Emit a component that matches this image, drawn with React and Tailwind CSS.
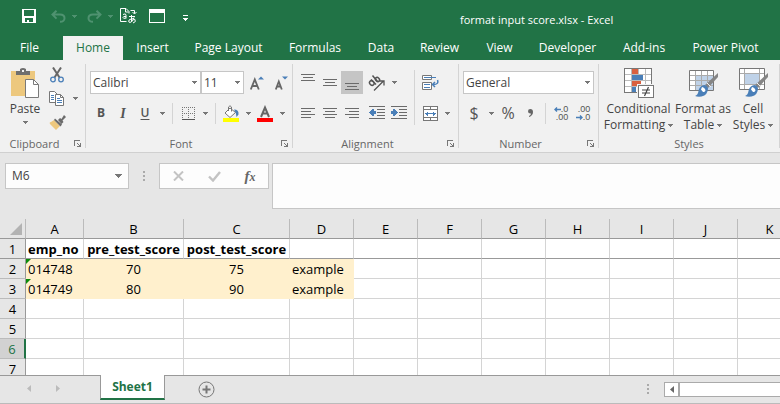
import React from "react";

const TABS = [
  { name: "Insert", width: "w-[59px]" },
  { name: "Page Layout", width: "w-[93px]" },
  { name: "Formulas", width: "w-[80px]" },
  { name: "Data", width: "w-[52px]" },
  { name: "Review", width: "w-[65px]" },
  { name: "View", width: "w-[55px]" },
  { name: "Developer", width: "w-[81px]" },
  { name: "Add-ins", width: "w-[72px]" },
  { name: "Power Pivot", width: "w-[91px]" },
];

const COLUMNS = ["A", "B", "C", "D", "E", "F", "G", "H", "I", "J", "K"];

const ROWS = [
  { n: 1, cells: ["emp_no", "pre_test_score", "post_test_score"] },
  { n: 2, cells: ["014748", "70", "75", "example"] },
  { n: 3, cells: ["014749", "80", "90", "example"] },
  { n: 4, cells: [] },
  { n: 5, cells: [] },
  { n: 6, cells: [] },
  { n: 7, cells: [] },
];

function Caret({ className = "text-[#777]" }) {
  return (
    <svg width="5" height="3" viewBox="0 0 5 3" className={`shrink-0 ${className}`} fill="currentColor" shapeRendering="crispEdges" aria-hidden="true">
      <path d="M0 0h5v1H4v1H3v1H2V2H1V1H0z" />
    </svg>
  );
}

function Tool({ label, children, className = "w-[22px]", pressed = false }) {
  return (
    <button type="button" aria-label={label} className={`flex h-full shrink-0 items-center justify-center text-[#555] ${className} ${pressed ? "bg-[#c5c5c5]" : ""}`}>
      {children}
    </button>
  );
}

function More({ label }) {
  return (
    <Tool label={label} className="w-3">
      <Caret />
    </Tool>
  );
}

function Divider({ className }) {
  return <span className={`w-px shrink-0 bg-[#d4d4d4] ${className}`} />;
}

function Group({ title, launcher = true, width, children }) {
  return (
    <section aria-label={title} className={`flex shrink-0 ${width}`}>
      <div className="flex min-w-0 flex-1 flex-col">
        <div className="h-[73px]">{children}</div>
        <div className="flex h-[14px] items-center">
          <h2 className="flex-1 text-center text-[11px] leading-[14px] text-[#666]">{title}</h2>
          {launcher && (
            <button type="button" aria-label={`${title} settings`} className="flex w-4 justify-start pl-[5px]">
              <svg width="8" height="8" viewBox="0 0 8 8" shapeRendering="crispEdges" fill="#777" aria-hidden="true">
                <path d="M0 0h6v1H1v5H0zM3 3h1v1H3zM4 4h1v1H4zM5 5h1v1H5zM7 3v4H3V6h2V5h1V3z" />
              </svg>
            </button>
          )}
        </div>
      </div>
      <Divider className="h-[84px]" />
    </section>
  );
}

function Dropdown({ label, value, className }) {
  return (
    <span className={`relative flex h-full shrink-0 ${className}`}>
      <select aria-label={label} defaultValue={value} className="h-full w-full appearance-none border border-[#c6c6c6] bg-white pl-[2px] text-[12px] text-[#444]">
        <option>{value}</option>
      </select>
      <span className="pointer-events-none absolute top-[10px] right-[4px]">
        <Caret />
      </span>
    </span>
  );
}

function Lines({ rows, width = 14, height = 11 }) {
  return (
    <svg width={width} height={height} viewBox={`0 0 ${width} ${height}`} fill="#6b6b6b" shapeRendering="crispEdges" aria-hidden="true">
      {rows.map(([x, y, w]) => (
        <rect key={y} x={x} y={y} width={w} height="1" />
      ))}
    </svg>
  );
}

function QuickAccess() {
  return (
    <div className="flex h-8 items-center pl-[18px] text-white">
      <button type="button" aria-label="Save" className="flex w-[22px] justify-center">
        <svg width="14" height="14" viewBox="0 0 14 14" fill="#fff" shapeRendering="crispEdges" aria-hidden="true">
          <path fillRule="evenodd" d="M0 0h14v14H0zM2 1v6h10V1zM3 9v4h2v-2h2v2h4V9z" />
        </svg>
      </button>
      <button type="button" aria-label="Undo" className="ml-[7px] flex w-[22px] justify-center text-[#4f9270]">
        <svg width="15" height="13" viewBox="0 0 15 13" fill="none" stroke="currentColor" strokeWidth="2" aria-hidden="true">
          <path d="M5.5 .7 1.5 4.6l4 4M2 4.6h7c6 0 6 7.2 0 7.2" />
        </svg>
      </button>
      <button type="button" aria-label="Undo history" className="flex w-[10px] justify-center">
        <Caret className="text-[#4f9270]" />
      </button>
      <button type="button" aria-label="Redo" className="ml-[4px] flex w-[22px] justify-center text-[#4f9270]">
        <svg width="15" height="13" viewBox="0 0 15 13" fill="none" stroke="currentColor" strokeWidth="2" aria-hidden="true">
          <path d="m9.5 .7 4 3.9-4 4M13 4.6H6c-6 0-6 7.2 0 7.2" />
        </svg>
      </button>
      <button type="button" aria-label="Redo history" className="flex w-[10px] justify-center">
        <Caret className="text-[#4f9270]" />
      </button>
      <button type="button" aria-label="Translate" className="ml-[2px] flex w-[22px] justify-center">
        <svg width="17" height="16" viewBox="0 0 17 16" fill="none" stroke="#fff" aria-hidden="true">
          <path d="M6.5 13.5h-6v-13h5.5l3 3v2M5.5 .5v3.5h3M3 6.5q3-1.5 3 .5v3.5M6 8.5q-3-.5-3 1t3 .5M10.5 2.5h4v3M12.5 4l2 2 2-2M9 8.500h6M11.5 7v6.5M14 9.5q-1 4.5-4 5-2 0-1-2.500 3-2.5 6-.5 1.500 2.5-2 3.500" />
        </svg>
      </button>
      <button type="button" aria-label="Form" className="ml-[7px] flex w-[22px] justify-center">
        <svg width="16" height="14" viewBox="0 0 16 14" fill="#fff" shapeRendering="crispEdges" aria-hidden="true">
          <path fillRule="evenodd" d="M0 0h16v14H0zM1 4v9h14V4z" />
        </svg>
      </button>
      <button type="button" aria-label="Customize toolbar" className="ml-[6px] flex w-[22px] justify-center pt-[3px]">
        <svg width="5" height="6" viewBox="0 0 5 6" fill="#fff" shapeRendering="crispEdges" aria-hidden="true">
          <path d="M0 0h5v1H0zM0 3h5v1H4v1H3v1H2V5H1V4H0z" />
        </svg>
      </button>
    </div>
  );
}

function ClipboardGroup() {
  return (
    <Group title="Clipboard" width="w-[86px]">
      <div className="flex">
        <button type="button" className="flex w-[45px] flex-col items-center pt-1 pl-[5px] text-[12px] leading-4 text-[#444]">
          <svg width="28" height="30" viewBox="0 0 28 30" aria-hidden="true">
            <path d="M0 3h24v25H0z" fill="#edc87e" />
            <path d="M5 7V3h4V1q3-2 6 0v2h4v4z" fill="#6f6f6f" />
            <rect x="11" y="2" width="2" height="2" fill="#f1f1f1" />
            <path d="M14.5 11.5h8l5 5v13h-13z" fill="#fff" stroke="#7a7a7a" />
            <path d="M22.5 11.5v5h5" fill="none" stroke="#7a7a7a" />
          </svg>
          <span className="mt-[3px]">Paste</span>
          <span className="mt-[4px]"><Caret /></span>
        </button>
        <div className="flex flex-col gap-[2px]">
          <div className="flex h-[21px]">
            <Tool label="Cut" className="w-[24px]">
              <svg width="14" height="16" viewBox="0 0 14 16" fill="none" aria-hidden="true">
                <path d="m3 .5 6.500 10M11 .5 4.500 10.500" stroke="#666" strokeWidth="2" />
                <circle cx="3" cy="12.500" r="2.300" stroke="#4a7fb8" strokeWidth="1.300" />
                <circle cx="11" cy="12.500" r="2.300" stroke="#4a7fb8" strokeWidth="1.300" />
              </svg>
            </Tool>
          </div>
          <div className="flex h-[22px]">
            <Tool label="Copy" className="w-[24px]">
              <svg width="16" height="15" viewBox="0 0 16 15" fill="#fff" stroke="#777" aria-hidden="true">
                <path d="M.5 .5h5l3 3v8h-8z" />
                <path d="M2 4.500h3M2 6.500h3M2 8.500h3" stroke="#4a7fb8" />
                <path d="M6.500 3.500h5l3 3v8h-8z" />
                <path d="M11.500 3.500v3h3" fill="none" />
                <path d="M8 7.500h3M8 9.500h5M8 11.500h5" stroke="#4a7fb8" />
              </svg>
            </Tool>
            <More label="Copy options" />
          </div>
          <div className="flex h-[22px]">
            <Tool label="Format Painter" className="w-[24px]">
              <svg width="17" height="15" viewBox="0 0 17 15" aria-hidden="true">
                <path d="m5 5 6 6-4 4L1 9q-1-2 1-2z" fill="#edc87e" />
                <path d="m6 3.500 7 6-1.500 2L5 5zM9 5l2-2 1.500 1L15 0l2 2-3.500 3.500 1 1.500-2 2z" fill="#6b6b6b" />
              </svg>
            </Tool>
          </div>
        </div>
      </div>
    </Group>
  );
}

function FontGroup() {
  return (
    <Group title="Font" width="w-[207px]">
      <div className="flex flex-col gap-2 pt-[7px] pl-1">
        <div className="flex h-[23px]">
          <Dropdown label="Font name" value="Calibri" className="w-[111px]" />
          <Dropdown label="Font size" value="11" className="w-[43px]" />
          <Tool label="Increase font size" className="w-[26px]">
            <svg width="14" height="14" viewBox="0 0 14 14" aria-hidden="true">
              <path d="m.8 13.500 4-10 4 10M2.300 10h5" fill="none" stroke="#666" strokeWidth="1.800" />
              <path d="M8 3.500h6L11 .5z" fill="#4a7fb8" />
            </svg>
          </Tool>
          <Tool label="Decrease font size" className="w-[22px]">
            <svg width="13" height="14" viewBox="0 0 13 14" aria-hidden="true">
              <path d="m.8 13.500 3-8 3 8M2 10.500h4" fill="none" stroke="#666" strokeWidth="1.800" />
              <path d="M7 .5h6l-3 3z" fill="#4a7fb8" />
            </svg>
          </Tool>
        </div>
        <div className="flex h-[22px] items-center">
          <Tool label="Bold"><b className="text-[12px]">B</b></Tool>
          <Tool label="Italic"><i className="font-['Liberation_Serif',serif] text-[14px] font-bold">I</i></Tool>
          <Tool label="Underline"><span className="text-[12px] font-semibold underline underline-offset-2">U</span></Tool>
          <More label="Underline options" />
          <Divider className="mx-1 h-[21px]" />
          <Tool label="Borders">
            <svg width="13" height="13" viewBox="0 0 13 13" shapeRendering="crispEdges" aria-hidden="true">
              <path d="M0 .5h13M0 6.500h13M.5 0v12M6.500 0v12M12.500 0v12" stroke="#777" strokeDasharray="1 1" />
              <path d="M0 12.500h13" stroke="#555" />
            </svg>
          </Tool>
          <More label="Border options" />
          <Divider className="mx-1 h-[21px]" />
          <Tool label="Fill color">
            <svg width="16" height="17" viewBox="0 0 16 17" aria-hidden="true">
              <path d="m2 8 5-5 5.500 4.500L7 12.500z" fill="#fff" stroke="#777" />
              <path d="M5.500 6V2q1.500-2.500 3 0v4.500" fill="none" stroke="#777" />
              <path d="M11 4.500q5 0 4.500 5l-2 2.500q0-4-2.500-7.500z" fill="#4a7fb8" />
              <path d="M0 13h16v4H0z" fill="#ff0" />
            </svg>
          </Tool>
          <More label="Fill color options" />
          <Tool label="Font color">
            <svg width="16" height="17" viewBox="0 0 16 17" aria-hidden="true">
              <path d="m4 12 4-9.500 4 9.500M5.500 8.500h5" fill="none" stroke="#666" strokeWidth="2" />
              <path d="M0 13h16v4H0z" fill="#f00" />
            </svg>
          </Tool>
          <More label="Font color options" />
        </div>
      </div>
    </Group>
  );
}

function Indent({ outdent }) {
  return (
    <svg width="16" height="14" viewBox="0 0 16 14" shapeRendering="crispEdges" aria-hidden="true">
      <path d="M0 .5h16M8 3.500h8M8 6.500h8M8 9.500h8M0 12.500h16" stroke="#6b6b6b" />
      {outdent ? (
        <path d="M0 6h1V5h1V4h1V3h2v2h2v3H5v2H3V9H2V8H1V7H0z" fill="#4a7fb8" />
      ) : (
        <path d="M7 6H6V5H5V4H4V3H2v2H0v3h2v2h2V9h1V8h1V7h1z" fill="#4a7fb8" />
      )}
    </svg>
  );
}

function AlignmentGroup() {
  return (
    <Group title="Alignment" width="w-[166px]">
      <div className="flex pl-1">
        <div className="flex flex-col gap-2 pt-[7px]">
          <div className="flex h-[23px]">
            <Tool label="Top align"><Lines height={17} rows={[[0, 0, 14], [2, 3, 10], [0, 6, 14]]} /></Tool>
            <Tool label="Middle align"><Lines height={17} rows={[[0, 5, 14], [2, 8, 10], [0, 11, 14]]} /></Tool>
            <Tool label="Bottom align" pressed><Lines height={17} rows={[[0, 9, 14], [2, 12, 10], [0, 15, 14]]} /></Tool>
            <Tool label="Orientation" className="ml-[3px] w-[22px]">
              <svg width="18" height="16" viewBox="0 0 18 16" fill="none" stroke="#555" aria-hidden="true">
                <path d="m6 15.500 9-9M11.500 6H16v4.500" strokeWidth="1.300" />
                <ellipse cx="3.800" cy="8" rx="2" ry="2.500" transform="rotate(-45 3.800 8)" strokeWidth="1.500" />
                <ellipse cx="9.500" cy="4.500" rx="1.800" ry="2.300" transform="rotate(-45 9.500 4.500)" strokeWidth="1.500" />
                <path d="m3 4.500 5 5M4.500 .5l5 6" strokeWidth="1.500" />
              </svg>
            </Tool>
            <More label="Orientation options" />
          </div>
          <div className="flex h-[22px]">
            <Tool label="Align left"><Lines rows={[[0, 0, 14], [0, 3, 10], [0, 6, 14], [0, 9, 10]]} /></Tool>
            <Tool label="Center"><Lines rows={[[0, 0, 14], [2, 3, 10], [0, 6, 14], [2, 9, 10]]} /></Tool>
            <Tool label="Align right"><Lines rows={[[0, 0, 14], [4, 3, 10], [0, 6, 14], [4, 9, 10]]} /></Tool>
            <Tool label="Decrease indent" className="ml-[3px] w-[22px]"><Indent outdent /></Tool>
            <Tool label="Increase indent"><Indent /></Tool>
          </div>
        </div>
        <Divider className="mx-1 mt-[6px] h-[55px]" />
        <div className="flex flex-col gap-2 pt-[7px]">
          <div className="flex h-[23px]">
            <Tool label="Wrap text">
              <svg width="17" height="16" viewBox="0 0 17 16" fill="none" aria-hidden="true">
                <path d="M.5 .5h9v4h-9zM.5 7.500h9v7h-9z" fill="#fff" stroke="#777" />
                <path d="M2 2.500h12M2 9.500h6M2 12.500h6" stroke="#4a7fb8" />
                <path d="M15.500 5q1.500 4.500-4 4.500M13 7l-2.500 2.500L13 12" stroke="#4a7fb8" strokeWidth="1.500" />
              </svg>
            </Tool>
          </div>
          <div className="flex h-[22px]">
            <Tool label="Merge and center">
              <svg width="15" height="15" viewBox="0 0 15 15" fill="#fff" stroke="#777" shapeRendering="crispEdges" aria-hidden="true">
                <path d="M.5 .5h14v14H.5zM0 3.500h15M0 11.500h15M7.500 0v3M7.500 12v3" />
                <path d="M2 7.500h11M4.500 5.500v4M3.500 6.500v2M10.500 5.500v4M11.500 6.500v2" stroke="#4a7fb8" />
              </svg>
            </Tool>
            <More label="Merge options" />
          </div>
        </div>
      </div>
    </Group>
  );
}

function NumberGroup() {
  return (
    <Group title="Number" width="w-[140px]">
      <div className="flex flex-col gap-2 pt-[7px] pl-1">
        <div className="flex h-[23px]">
          <Dropdown label="Number format" value="General" className="w-[131px]" />
        </div>
        <div className="flex h-[22px] items-center">
          <Tool label="Currency"><span className="text-[16px] leading-none">$</span></Tool>
          <More label="Currency options" />
          <Tool label="Percent"><span className="text-[16px] leading-none">%</span></Tool>
          <Tool label="Comma style">
            <svg width="5" height="8" viewBox="0 0 5 8" fill="#666" aria-hidden="true">
              <path d="M0 2.300A2.300 2.300 0 0 1 2.300 0Q5 0 5 3q0 3.500-4 5V7q2-1 2-2.500Q0 4.800 0 2.300z" />
            </svg>
          </Tool>
          <Divider className="mx-1 h-[21px]" />
          <Tool label="Increase decimal" className="w-[22px]">
            <span className="flex flex-col items-end font-['Liberation_Sans',sans-serif] text-[9px] leading-[8px]">
              <span className="flex items-center">
                <svg width="7" height="5" viewBox="0 0 7 5" fill="none" stroke="#4a7fb8" aria-hidden="true"><path d="M7 2.500H1M3 .5l-2 2 2 2" strokeWidth="1.400" /></svg>.0
              </span>
              <span>.00</span>
            </span>
          </Tool>
          <Tool label="Decrease decimal" className="w-[22px]">
            <span className="flex flex-col items-end font-['Liberation_Sans',sans-serif] text-[9px] leading-[8px]">
              <span>.00</span>
              <span className="flex items-center">
                <svg width="7" height="5" viewBox="0 0 7 5" fill="none" stroke="#4a7fb8" aria-hidden="true"><path d="M0 2.500h6M4 .5l2 2-2 2" strokeWidth="1.400" /></svg>.0
              </span>
            </span>
          </Tool>
        </div>
      </div>
    </Group>
  );
}

function Brush() {
  return (
    <>
      <path d="m29 5v4L19 20l-3-3z" fill="#858585" />
      <path d="m18 15 4 4" stroke="#f1f1f1" strokeWidth="1" />
      <path d="M13.500 17.500q4-1.500 5.500 2.500 0 7-6.500 8.500-4 .5-6.500-.5 3-1 3.500-5 .5-4 4-5.500z" fill="#4a7fb8" />
      <path d="M13 19q3 .5 3.500 3.500-1 2-2.500 1.500l-2-2.500z" fill="#fff" />
    </>
  );
}

function StyleButton({ top, bottom, width, children }) {
  return (
    <button type="button" className={`flex shrink-0 flex-col items-center text-[12px] leading-4 whitespace-nowrap text-[#444] ${width}`}>
      <span className="mb-[2px] flex h-[31px]">{children}</span>
      <span>{top}</span>
      <span className="flex items-center gap-[3px]">{bottom}<Caret /></span>
    </button>
  );
}

function StylesGroup() {
  return (
    <Group title="Styles" width="w-[181px]" launcher={false}>
      <div className="flex pt-1 pl-[3px]">
        <StyleButton top="Conditional" bottom="Formatting" width="w-[73px]">
          <svg width="30" height="30" viewBox="0 0 30 30" shapeRendering="crispEdges" aria-hidden="true">
            <path d="M.5 .5h27v24H.5z" fill="#fff" />
            <path d="M7.500 1v23M14.500 1v23M21.500 1v23M1 6.500h26M1 12.500h26M1 18.500h26" stroke="#bbb" />
            <path d="M8 1h6v5H8zM8 13h9v5H8z" fill="#d9603f" />
            <path d="M8 7h11v5H8zM8 19h4v5H8z" fill="#4a7fb8" />
            <path d="M.5 .5h27v24H.5z" fill="none" stroke="#777" />
            <path d="M13 16h17v14H13z" fill="#f1f1f1" />
            <path d="M14.500 17.500h15v12h-15z" fill="#fff" stroke="#777" />
            <path d="M18 22h8M18 25h8M24.500 19l-4 9" stroke="#444" strokeWidth="1.200" shapeRendering="auto" />
          </svg>
        </StyleButton>
        <StyleButton top="Format as" bottom="Table" width="w-[56px]">
          <svg width="29" height="30" viewBox="0 0 29 30" aria-hidden="true">
            <path d="M.5 2.500h24v20H.5z" fill="#fff" />
            <path d="M7 8h17v14H7z" fill="#bfd2e8" />
            <path d="M6.500 3v19M12.500 3v19M18.500 3v19M1 7.500h23M1 12.500h23M1 17.500h23" stroke="#aaa" />
            <path d="M.5 2.500h24v20H.5z" fill="none" stroke="#777" />
            <Brush />
          </svg>
        </StyleButton>
        <StyleButton top="Cell" bottom="Styles" width="w-[44px]">
          <svg width="29" height="30" viewBox="0 0 29 30" aria-hidden="true">
            <path d="M.5 .5h25v21H.5z" fill="#fff" />
            <path d="M6 6h14v10H6z" fill="#bfd2e8" />
            <path d="M5.500 1v20M20.500 1v20M1 5.500h24M1 16.500h24" stroke="#aaa" />
            <path d="M.5 .5h25v21H.5z" fill="none" stroke="#777" />
            <Brush />
          </svg>
        </StyleButton>
      </div>
    </Group>
  );
}

function Dots() {
  return (
    <svg width="2" height="10" viewBox="0 0 2 10" fill="#aaa" shapeRendering="crispEdges" className="shrink-0" aria-hidden="true">
      <path d="M0 0h2v2H0zM0 4h2v2H0zM0 8h2v2H0z" />
    </svg>
  );
}

function FormulaBar() {
  return (
    <div className="flex h-[66px] shrink-0 items-start pt-[10px] pl-[5px]">
      <div className="flex h-[26px] w-[124px] shrink-0 border border-[#c6c6c6] bg-[#fdfdfd]">
        <input aria-label="Name box" defaultValue="M6" className="min-w-0 flex-1 bg-transparent pl-[6px] text-[12px] text-[#444] outline-none" />
        <button type="button" aria-label="Named ranges" className="flex w-[20px] items-center justify-center">
          <svg width="7" height="4" viewBox="0 0 7 4" fill="#777" shapeRendering="crispEdges" aria-hidden="true">
            <path d="M0 0h7v1H6v1H5v1H4v1H3V3H2V2H1V1H0z" />
          </svg>
        </button>
      </div>
      <div className="flex h-[26px] w-[30px] shrink-0 items-center justify-center"><Dots /></div>
      <div className="mr-[3px] flex h-[26px] w-[110px] shrink-0 items-center border border-[#c6c6c6] bg-[#fdfdfd]">
        <Tool label="Cancel" className="w-9">
          <svg width="11" height="10" viewBox="0 0 11 10" stroke="#c3c3c3" strokeWidth="2" aria-hidden="true"><path d="m1 .5 9 9M10 .5l-9 9" /></svg>
        </Tool>
        <Tool label="Enter" className="w-9">
          <svg width="13" height="11" viewBox="0 0 13 11" fill="none" stroke="#c3c3c3" strokeWidth="2.400" aria-hidden="true"><path d="m1 5.500 4 4L12 1" /></svg>
        </Tool>
        <Tool label="Insert function" className="w-9">
          <i className="font-['Liberation_Serif',serif] text-[15px] leading-none font-bold text-[#666]">f<span className="text-[12px]">x</span></i>
        </Tool>
      </div>
      <textarea aria-label="Formula" className="block h-[46px] min-w-0 flex-1 resize-none border border-r-0 border-[#c6c6c6] bg-[#fdfdfd] outline-none" />
    </div>
  );
}

function cellClass(row, col, text) {
  const filled = (row === 2 || row === 3) && col < 4;
  const align = (row === 1 || col === 1 || col === 2) && col !== 0 ? "text-center" : "pl-[2px] text-left";
  const edge = filled ? "border-[#fff0cd] bg-[#fff0cd]" : row === 1 ? "border-r-[#d4d4d4] border-b-[#999]" : "border-[#d4d4d4]";
  return `relative h-5 overflow-hidden border-r border-b pt-[2px] whitespace-nowrap ${align} ${edge} ${row === 1 && text ? "font-bold" : ""}`;
}

function Sheet() {
  return (
    <div className="min-h-0 flex-1 overflow-hidden bg-white">
      <table className="w-[802px] table-fixed border-separate border-spacing-0 text-[13px] leading-[17px] text-black">
        <colgroup>
          <col className="w-[26px]" />
          <col className="w-[58px]" />
          <col className="w-[100px]" />
          <col className="w-[106px]" />
          {COLUMNS.slice(3).map((c) => (
            <col key={c} className="w-[64px]" />
          ))}
        </colgroup>
        <thead>
          <tr className="bg-[#e6e6e6]">
            <th className="h-5 border-r border-b border-r-[#bbb] border-b-[#999] p-0" aria-label="Select all">
              <svg width="12" height="12" viewBox="0 0 12 12" className="ml-auto mr-[3px]" fill="#b3b3b3" aria-hidden="true"><path d="M12 0v12H0z" /></svg>
            </th>
            {COLUMNS.map((c) => (
              <th key={c} scope="col" className="h-5 border-r border-b border-r-[#bbb] border-b-[#999] pt-[2px] font-normal">{c}</th>
            ))}
          </tr>
        </thead>
        <tbody>
          {ROWS.map((row) => (
            <tr key={row.n}>
              <th
                scope="row"
                className={`h-5 border-b pt-[2px] font-normal ${row.n === 6 ? "border-r-2 border-r-[#217346] bg-[#d2d2d2] text-[#217346]" : "border-r border-r-[#999] bg-[#e6e6e6]"} ${row.n === 1 ? "border-b-[#999]" : "border-b-[#bbb]"}`}
              >
                {row.n}
              </th>
              {COLUMNS.map((c, i) => (
                <td key={c} className={cellClass(row.n, i, row.cells[i])}>
                  {row.cells[i]}
                  {i === 0 && (row.n === 2 || row.n === 3) && (
                    <svg width="5" height="5" viewBox="0 0 5 5" className="absolute top-0 left-0" fill="#0a8a0a" aria-hidden="true"><path d="M0 0h5L0 5z" /></svg>
                  )}
                </td>
              ))}
            </tr>
          ))}
        </tbody>
      </table>
    </div>
  );
}

function SheetTabs() {
  return (
    <footer className="flex h-[29px] shrink-0 items-start border-t border-b border-t-[#999] border-b-[#bbb] bg-[#e6e6e6]">
      <div className="flex h-[25px] w-[100px] items-center pl-[14px]">
        <Tool label="Previous sheet" className="w-[29px]">
          <svg width="4" height="7" viewBox="0 0 4 7" fill="#bbb" aria-hidden="true"><path d="M4 0v7L0 3.500z" /></svg>
        </Tool>
        <Tool label="Next sheet" className="w-[29px]">
          <svg width="4" height="7" viewBox="0 0 4 7" fill="#bbb" aria-hidden="true"><path d="M0 0v7l4-3.500z" /></svg>
        </Tool>
      </div>
      <button type="button" className="-mt-px h-[25px] w-[65px] border-x border-b-2 border-x-[#999] border-b-[#217346] bg-white text-[12px] font-bold text-[#217346]">Sheet1</button>
      <button type="button" aria-label="New sheet" className="ml-[30px] flex h-[26px] w-[22px] items-center justify-center">
        <svg width="17" height="17" viewBox="0 0 17 17" fill="none" stroke="#777" aria-hidden="true">
          <circle cx="8.500" cy="8.500" r="7.500" />
          <path d="M8.500 4.500v8M4.500 8.500h8" strokeWidth="2" />
        </svg>
      </button>
      <div className="ml-auto flex h-[26px] items-center"><Dots /></div>
      <div className="mt-[6px] ml-[15px] flex h-[15px] w-[116px] border border-r-0 border-[#aaa] bg-white">
        <button type="button" aria-label="Scroll left" className="flex w-[15px] items-center justify-center border-r-2 border-[#aaa]">
          <svg width="4" height="7" viewBox="0 0 4 7" fill="#666" aria-hidden="true"><path d="M4 0v7L0 3.500z" /></svg>
        </button>
      </div>
    </footer>
  );
}

export default function App() {
  return (
    <div className="flex h-screen flex-col overflow-hidden bg-[#e6e6e6] font-['Open_Sans','Noto_Sans',sans-serif]">
      <header className="shrink-0 bg-[#217346] text-[12px] text-white">
        <div className="flex h-9 items-start">
          <div className="w-[460px] shrink-0"><QuickAccess /></div>
          <h1 className="pt-[12px] text-[11px] leading-4 whitespace-nowrap">format input score.xlsx - Excel</h1>
        </div>
        <nav aria-label="Ribbon" className="flex h-6 leading-6 whitespace-nowrap">
          <button type="button" className="w-[63px] shrink-0 pr-[4px]">File</button>
          <button type="button" className="w-[60px] shrink-0 bg-[#f1f1f1] text-[#217346]">Home</button>
          {TABS.map((t) => (
            <button key={t.name} type="button" className={`shrink-0 ${t.width}`}>{t.name}</button>
          ))}
        </nav>
      </header>
      <div className="flex h-[93px] shrink-0 overflow-hidden border-b border-[#d0d0d0] bg-[#f1f1f1] pt-1">
        <ClipboardGroup />
        <FontGroup />
        <AlignmentGroup />
        <NumberGroup />
        <StylesGroup />
      </div>
      <FormulaBar />
      <Sheet />
      <SheetTabs />
    </div>
  );
}
